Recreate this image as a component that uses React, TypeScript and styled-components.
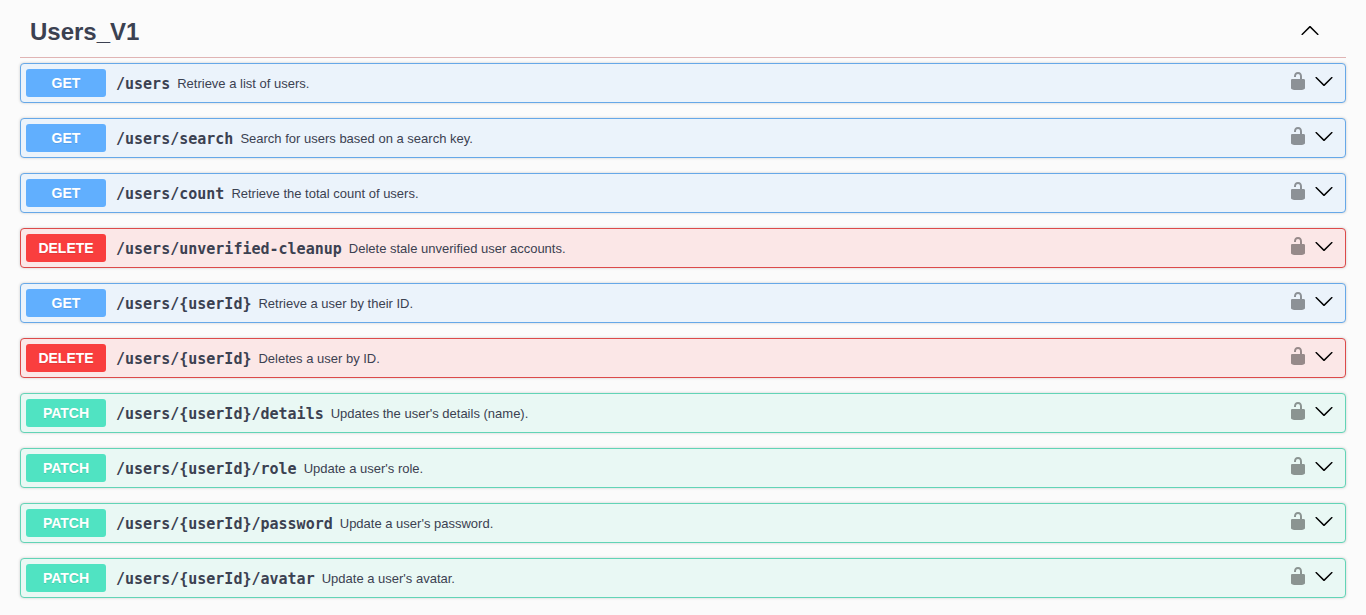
import React from 'react';
import styled, { createGlobalStyle } from 'styled-components';

type Method = 'GET' | 'DELETE' | 'PATCH';

const palette: Record<Method, { main: string; border: string; tint: string }> = {
  GET: { main: '#61affe', border: '#66a8e8', tint: '#ebf3fb' },
  DELETE: { main: '#f93e3e', border: '#dc4a4a', tint: '#fbe7e7' },
  PATCH: { main: '#50e3c2', border: '#62d4b6', tint: '#e9f8f4' },
};

const operations: { method: Method; path: string; summary: string }[] = [
  { method: 'GET', path: '/users', summary: 'Retrieve a list of users.' },
  { method: 'GET', path: '/users/search', summary: 'Search for users based on a search key.' },
  { method: 'GET', path: '/users/count', summary: 'Retrieve the total count of users.' },
  { method: 'DELETE', path: '/users/unverified-cleanup', summary: 'Delete stale unverified user accounts.' },
  { method: 'GET', path: '/users/{userId}', summary: 'Retrieve a user by their ID.' },
  { method: 'DELETE', path: '/users/{userId}', summary: 'Deletes a user by ID.' },
  { method: 'PATCH', path: '/users/{userId}/details', summary: "Updates the user's details (name)." },
  { method: 'PATCH', path: '/users/{userId}/role', summary: "Update a user's role." },
  { method: 'PATCH', path: '/users/{userId}/password', summary: "Update a user's password." },
  { method: 'PATCH', path: '/users/{userId}/avatar', summary: "Update a user's avatar." },
];

const GlobalStyle = createGlobalStyle`
  *, *::before, *::after { box-sizing: border-box; }
  body {
    margin: 0;
    background: #fbfbfb;
    color: #3b4151;
    font-family: "Liberation Sans", Arial, sans-serif;
  }
`;

const Section = styled.main`
  padding: 5px 20px 17px;
`;

const SectionHeader = styled.header`
  display: flex;
  align-items: center;
  justify-content: space-between;
  height: 53px;
  margin-bottom: 5px;
  padding: 0 26px 0 10px;
  border-bottom: 1px solid #e0b4b4;
`;

const Title = styled.h1`
  margin: 0;
  padding-top: 2px;
  font-size: 24px;
  line-height: 28px;
  font-weight: 700;
`;

const IconButton = styled.button`
  display: flex;
  flex: none;
  padding: 0;
  border: 0;
  background: none;
  color: #000;
  cursor: pointer;
`;

const CollapseButton = styled(IconButton)`
  padding-bottom: 2px;
`;

const Icon = styled.svg`
  display: block;
  width: 20px;
  height: 20px;
  fill: currentColor;
`;

const LockIcon = styled(Icon)`
  opacity: 0.4;
`;

const OperationList = styled.ul`
  display: flex;
  flex-direction: column;
  gap: 15px;
  margin: 0;
  padding: 0;
  list-style: none;
`;

const Operation = styled.li<{ $method: Method }>`
  display: flex;
  align-items: center;
  min-height: 40px;
  padding: 5px 11px 5px 5px;
  border: 1px solid ${({ $method }) => palette[$method].border};
  border-radius: 4px;
  background: ${({ $method }) => palette[$method].tint};
  box-shadow: 0 0 3px rgba(0, 0, 0, 0.19);
`;

const Summary = styled.button`
  display: flex;
  flex: 1;
  align-items: center;
  min-width: 0;
  padding: 0;
  border: 0;
  background: none;
  color: inherit;
  font-family: inherit;
  text-align: left;
  cursor: pointer;
`;

const Badge = styled.span<{ $method: Method }>`
  flex: none;
  width: 80px;
  margin-right: 10px;
  border-radius: 3px;
  background: ${({ $method }) => palette[$method].main};
  color: #fff;
  font-size: 14px;
  line-height: 28px;
  font-weight: 700;
  text-align: center;
  text-shadow: 0 1px 0 rgba(0, 0, 0, 0.1);
`;

const Path = styled.span`
  margin-right: 7px;
  padding-top: 2px;
  font-family: "DejaVu Sans Mono", monospace;
  font-size: 15px;
  line-height: 20px;
  font-weight: 700;
`;

const Description = styled.span`
  padding-top: 2px;
  font-size: 13px;
  line-height: 20px;
`;

const Actions = styled.div`
  display: flex;
  gap: 6px;
  padding-bottom: 4px;
`;

const ARROW_DOWN =
  'M17.418 6.109c.272-.268.709-.268.979 0s.271.701 0 .969l-7.908 7.83c-.27.268-.707.268-.979 0l-7.908-7.83c-.27-.268-.27-.701 0-.969.271-.268.709-.268.979 0L10 13.25l7.418-7.141z';
const ARROW_UP =
  'M17.418 14.908c.272.268.709.268.979 0s.271-.701 0-.969l-7.908-7.83c-.27-.268-.707-.268-.979 0l-7.908 7.83c-.27.268-.27.701 0 .969.271.268.709.268.979 0L10 7.767l7.418 7.141z';
const UNLOCKED =
  'M15.8 8H14V5.6C14 2.703 12.665 1 10 1 7.334 1 6 2.703 6 5.6V6h2v-.801C8 3.754 8.797 3 10 3c1.203 0 2 .754 2 2.199V8H4c-.553 0-1 .646-1 1.199V17c0 .549.428 1.139.951 1.307l1.197.387C5.672 18.861 6.55 19 7.1 19h5.8c.549 0 1.428-.139 1.951-.307l1.196-.387c.524-.167.953-.757.953-1.306V9.199C17 8.646 16.352 8 15.8 8z';

export default function App() {
  return (
    <>
      <GlobalStyle />
      <Section>
        <SectionHeader>
          <Title>Users_V1</Title>
          <CollapseButton type="button" aria-label="Collapse section">
            <Icon viewBox="0 0 20 20"><path d={ARROW_UP} /></Icon>
          </CollapseButton>
        </SectionHeader>
        <OperationList>
          {operations.map(({ method, path, summary }) => (
            <Operation key={method + path} $method={method}>
              <Summary type="button">
                <Badge $method={method}>{method}</Badge>
                <Path>{path}</Path>
                <Description>{summary}</Description>
              </Summary>
              <Actions>
                <IconButton type="button" aria-label="Authorize">
                  <LockIcon viewBox="0 0 20 20"><path d={UNLOCKED} /></LockIcon>
                </IconButton>
                <IconButton type="button" aria-label="Expand operation">
                  <Icon viewBox="0 0 20 20"><path d={ARROW_DOWN} /></Icon>
                </IconButton>
              </Actions>
            </Operation>
          ))}
        </OperationList>
      </Section>
    </>
  );
}
